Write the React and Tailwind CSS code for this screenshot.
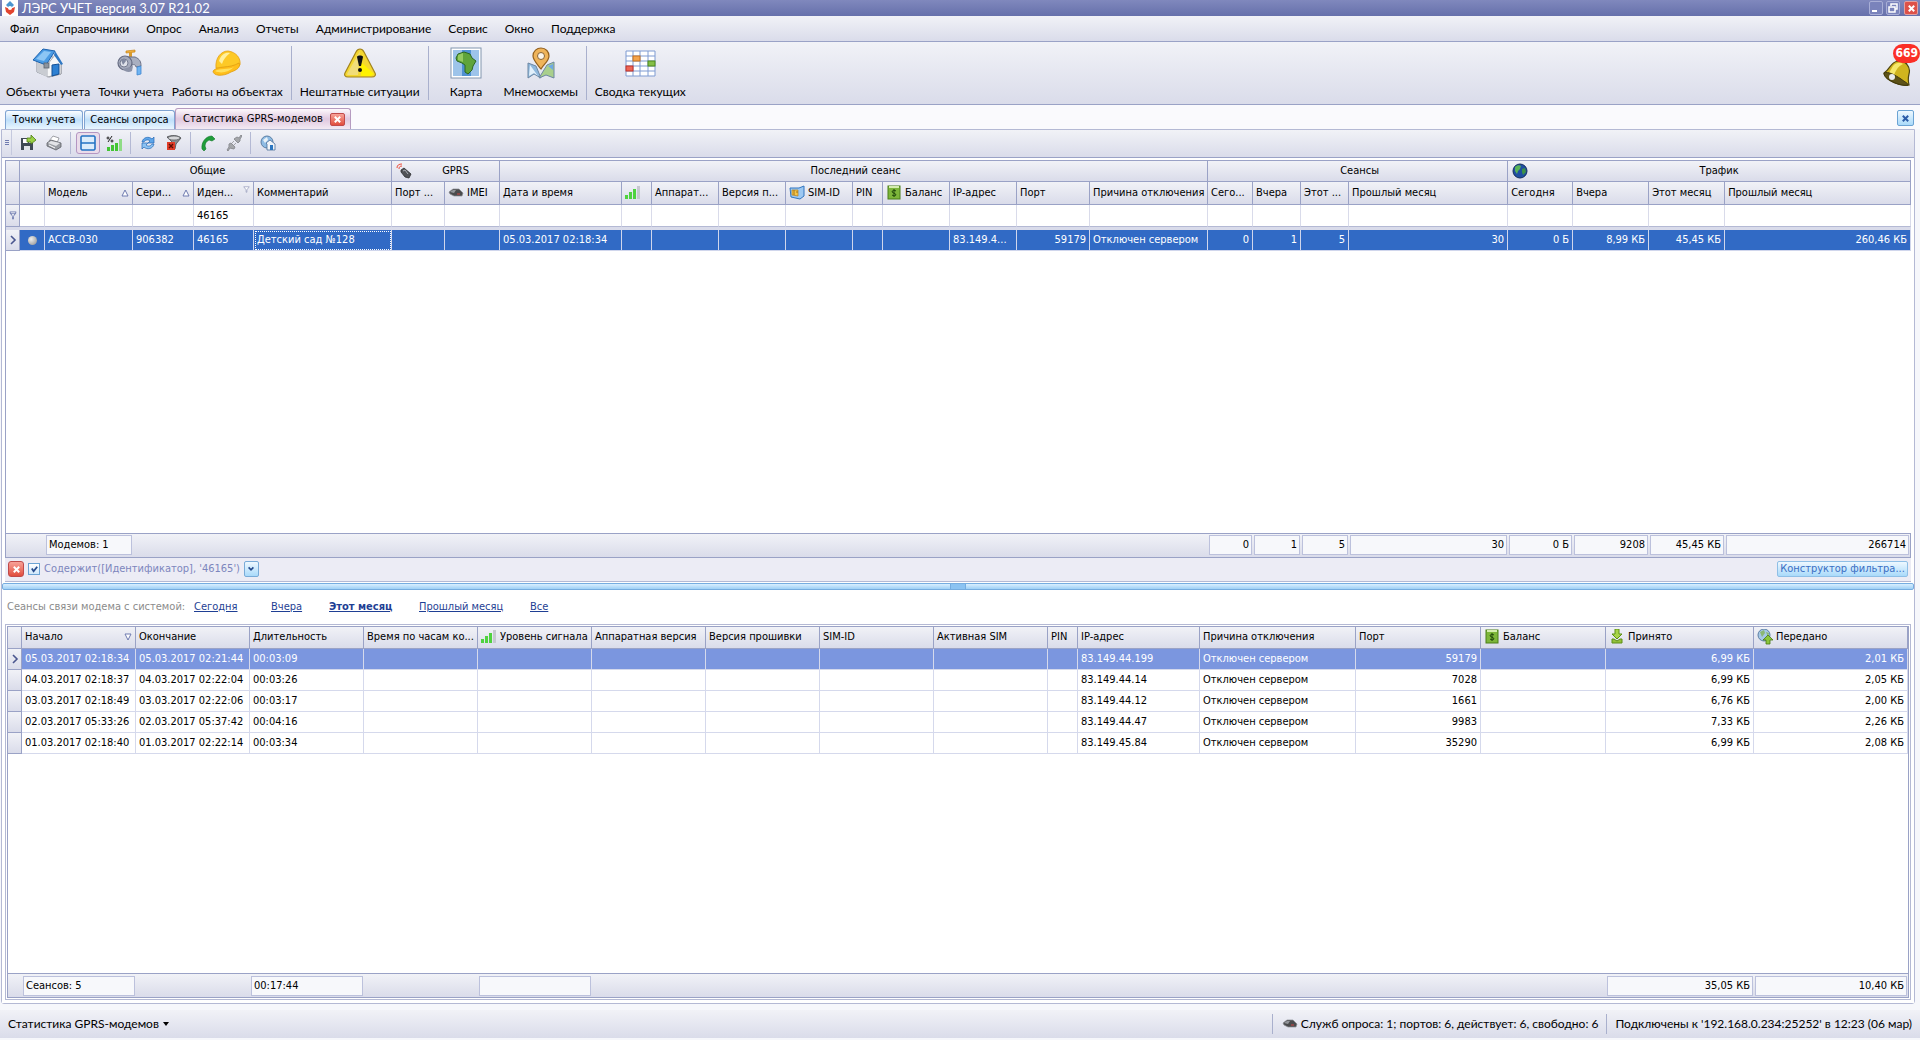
import clsx from 'clsx';

const menuItems = ['Файл', 'Справочники', 'Опрос', 'Анализ', 'Отчеты', 'Администрирование', 'Сервис', 'Окно', 'Поддержка'];

const HouseIcon = () => (
  <svg viewBox="0 0 32 32" className="size-8">
    <path d="M5 14 L18 8 L29 17 V27 L17 30 L5 25 Z" fill="#e9ebee" stroke="#8b8f98" strokeWidth="1" />
    <path d="M15 18 L23 8 L29 17 V27 L15 30 Z" fill="#f6f7f8" stroke="#9a9da5" strokeWidth=".8" />
    <path d="M5 14 L15 18 V30 L5 25 Z" fill="#c9ccd2" />
    <path d="M1 13 L11 2 L23 4 L14 18 Z" fill="#4a9be4" stroke="#1c62ae" strokeWidth="1" />
    <path d="M4 12 L12 4 L19 5 L12 14 Z" fill="#8cc6f5" />
    <path d="M23 4 L31 17 L29 18 L22 8 Z" fill="#2f78c4" />
    <path d="M20 18 L27 17 V27 L20 29 Z" fill="#2d80d2" stroke="#145096" strokeWidth="1" />
    <rect x="12" y="16" width="5" height="5" fill="#8c949f" stroke="#5d646e" strokeWidth=".8" />
  </svg>
);

const TapIcon = () => (
  <svg viewBox="0 0 32 32" className="size-8">
    <path d="M11 4 L20 3 L20 5 L11 6 Z" fill="#f0b03a" stroke="#c88418" strokeWidth=".7" />
    <rect x="14" y="5" width="3" height="5" fill="#d99a2c" />
    <path d="M12 10 H20 C25 12 26 15 26 19 L21 20 C21 18 19 17 17 18 Z" fill="#a9afc0" stroke="#6a7086" strokeWidth="1" />
    <circle cx="10" cy="16" r="7" fill="#a5abbd" stroke="#666c82" strokeWidth="1.2" />
    <circle cx="9" cy="16" r="4" fill="#dfe2ea" stroke="#767c91" />
    <path d="M6 13 C8 11 11 12 11 14 L8 18 Z" fill="#8189a0" />
    <path d="M8 22 L18 19 L17 24 C14 26 10 25 8 22 Z" fill="#8c93a8" />
    <path d="M22 20 L26 19 L26 27 L22 28 Z" fill="#6fb4f2" stroke="#3f86cf" strokeWidth=".8" />
  </svg>
);

const HelmetIcon = () => (
  <svg viewBox="0 0 32 32" className="size-8">
    <path d="M5 21 C4 11 10 4 17 4 C25 5 30 11 29 18 L24 23 Z" fill="#fdc926" stroke="#e6a012" strokeWidth=".8" />
    <path d="M8 14 C10 7 15 5 19 6 C15 9 12 13 11 17 Z" fill="#fff0a0" />
    <path d="M2 24 C7 18 18 22 28 16 C30 20 26 23 20 25 C12 30 2 29 2 24 Z" fill="#ffbe1b" stroke="#e09d12" strokeWidth=".8" />
    <path d="M4 24 C9 21 17 23 23 20 C18 25 10 27 4 24 Z" fill="#ffe05c" />
  </svg>
);

const WarningIcon = () => (
  <svg viewBox="0 0 32 32" className="size-8">
    <path d="M16 2 C18 2 19 3 20 5 L31 26 C32 28 31 30 28 30 H4 C1 30 0 28 1 26 L12 5 C13 3 14 2 16 2 Z" fill="#f4d730" stroke="#a2831c" strokeWidth="1.2" />
    <path d="M16 4 L3 27 C3 28 4 28 5 28 H14 Z" fill="#f2dd78" />
    <path d="M17 15 L30 27 L27 29 H17 Z" fill="#fff200" />
    <path d="M13 10 C13 8 19 8 19 10 L17 19 H15 Z" fill="#111" />
    <circle cx="16" cy="23" r="2" fill="#111" />
  </svg>
);

const MapIcon = () => (
  <svg viewBox="0 0 32 32" className="size-8">
    <rect x="1" y="1" width="30" height="30" fill="#fff" stroke="#8296ae" />
    <rect x="3" y="3" width="26" height="26" fill="#9dc4ea" />
    <rect x="12" y="3" width="9" height="26" fill="#4f91d2" />
    <path d="M8 7 L14 5 L20 7 L22 11 L26 14 L23 19 L22 23 L18 27 L15 25 L15 18 L12 16 L7 14 L6 11 Z" fill="#5fa43a" stroke="#2c6722" strokeWidth="1" />
    <path d="M8 8 L13 6 V15 L8 13 Z" fill="#95cb62" />
  </svg>
);

const PinIcon = () => (
  <svg viewBox="0 0 32 32" className="size-8">
    <path d="M3 16 L11 19 L16 31 L9 27 L3 31 Z" fill="#8fb8dd" stroke="#6d87a3" />
    <path d="M29 15 L22 18 L14 31 L21 28 L29 31 Z" fill="#a9cf8c" stroke="#6d87a3" />
    <path d="M23 19 L28 17 V23 Z" fill="#6ea9e4" />
    <path d="M5 18 L13 29 L9 26 L4 29 Z" fill="#e3f0fb" />
    <path d="M16 22 C12 17 8 13 8 9 C8 4 12 1 16 1 C21 1 24 5 24 9 C24 14 19 17 16 22 Z" fill="#efb45a" stroke="#93601e" strokeWidth="1.2" />
    <circle cx="16" cy="9" r="3.5" fill="#fbf5ea" stroke="#8a6334" />
  </svg>
);

const CalendarIcon = () => (
  <svg viewBox="0 0 32 32" className="size-8">
    <rect x="2" y="4" width="29" height="25" fill="#fff" />
    <path d="M2 4 H31 V29 H2 Z M2 9 H31 M2 14 H31 M2 19 H31 M2 24 H31 M9 4 V29 M16 4 V29 M24 4 V29" fill="none" stroke="#7f9bd2" />
    <rect x="9" y="9" width="7" height="5" fill="#f4a44c" stroke="#c8701a" />
    <rect x="24" y="14" width="7" height="5" fill="#84bf47" stroke="#4f8a1d" />
    <rect x="2" y="19" width="7" height="5" fill="#ee6555" stroke="#c03328" />
  </svg>
);

const toolGroups = [
  [
    { label: 'Объекты учета', icon: HouseIcon },
    { label: 'Точки учета', icon: TapIcon },
    { label: 'Работы на объектах', icon: HelmetIcon },
  ],
  [{ label: 'Нештатные ситуации', icon: WarningIcon }],
  [
    { label: 'Карта', icon: MapIcon, wide: true },
    { label: 'Мнемосхемы', icon: PinIcon },
  ],
  [{ label: 'Сводка текущих', icon: CalendarIcon }],
];

const BellIcon = () => (
  <svg viewBox="0 0 30 30" className="size-[30px]">
    <path d="M22 2 L26 4 L25 7 L20 6 Z" fill="#3f3c22" />
    <path d="M2 16 C8 13 8 5 16 4 C24 4 29 10 27 17 C26 21 26 24 27 28 C20 30 3 24 2 16 Z" fill="#d0b41e" stroke="#4f4510" strokeWidth="1.2" />
    <path d="M11 9 C14 5 19 5 21 7 C15 10 13 15 12 19 L7 16 Z" fill="#f6e86c" />
    <path d="M2 16 C6 14 13 18 19 22 C23 25 27 27 26 28 C19 30 1 22 2 16 Z" fill="#5d5218" stroke="#3f380c" />
    <circle cx="10" cy="20" r="3" fill="#e9ebef" />
  </svg>
);

const BarsIcon = () => (
  <svg viewBox="0 0 16 16" className="size-4 shrink-0">
    <path d="M0 10 H3 V14 H0 Z M4 7 H7 V14 H4 Z M8 4 H11 V14 H8 Z" fill="#4fd23f" />
    <path d="M12 1 H15 V14 H12 Z" fill="#c6c8d0" />
  </svg>
);

const ModemIcon = () => (
  <svg viewBox="0 0 16 16" className="size-4 shrink-0">
    <path d="M1 7 L5 4 L11 4 L15 8 L14 11 L6 11 L2 9 Z" fill="#4a4b4d" stroke="#8b8d92" strokeWidth=".7" />
    <path d="M2 7 L5 5 L8 5 L6 8 Z" fill="#93969b" />
    <path d="M9 9 L12 9" stroke="#c44" />
  </svg>
);

const AntennaIcon = () => (
  <svg viewBox="0 0 16 16" className="size-4">
    <path d="M5 7 L8 5 L15 11 L13 15 L9 14 L5 9 Z" fill="#505256" stroke="#2b2c2f" strokeWidth=".8" />
    <path d="M7 8 L9 7 L12 11" fill="none" stroke="#a9acb2" />
    <path d="M1 5 C1 2 3 1 6 1 M3 6 C3 4 4 3 6 3" fill="none" stroke="#ee4b38" />
  </svg>
);

const SimIcon = () => (
  <svg viewBox="0 0 16 16" className="size-4 shrink-0">
    <path d="M1 3 L10 3 L15 1 V11 L11 14 L2 12 Z" fill="#9cc8f2" stroke="#3277c0" />
    <path d="M3 5 L9 5 V11 L3 10 Z" fill="#f6c445" stroke="#b3801c" strokeWidth=".7" />
    <path d="M5 5 V10 M7 7 H9" stroke="#8a6215" strokeWidth=".8" />
  </svg>
);

const MoneyIcon = () => (
  <svg viewBox="0 0 16 16" className="size-4 shrink-0">
    <rect x="2" y="1" width="12" height="13" fill="#7db63a" stroke="#4b7f18" />
    <rect x="3" y="1" width="10" height="2" fill="#d4edae" />
    <path d="M10 6 C9 5 6 5 6 7 C6 8 10 8 10 10 C10 11 7 11 6 10 M8 4 V12" fill="none" stroke="#20480a" />
  </svg>
);

const GlobeIcon = () => (
  <svg viewBox="0 0 16 16" className="size-4">
    <circle cx="8" cy="8" r="7" fill="#1f4fa0" stroke="#122c5c" />
    <path d="M3 4 C5 2 8 2 9 3 L8 6 L6 8 L5 11 L3 8 Z" fill="#58b356" />
    <path d="M10 6 L13 5 L14 9 L11 12 L10 9 Z" fill="#3c9346" />
  </svg>
);

const DownIcon = () => (
  <svg viewBox="0 0 16 16" className="size-4 shrink-0">
    <path d="M6 0 H10 V5 H13 L8 10 L3 5 H6 Z" fill="#a8d548" stroke="#5c8f16" />
    <path d="M3 10 H5 L8 12 L11 10 H13 V14 H3 Z" fill="#93c13a" stroke="#5c8f16" />
  </svg>
);

const UpIcon = () => (
  <svg viewBox="0 0 16 16" className="size-4 shrink-0">
    <circle cx="7" cy="6" r="6" fill="#a6c8e6" stroke="#5c7fa3" />
    <path d="M3 3 L7 1 L8 4 L5 8 Z M9 3 L12 4 L11 8 Z" fill="#8bb874" />
    <path d="M11 6 L16 11 H13 V15 H9 V11 H6 Z" fill="#8cc63c" stroke="#47780f" strokeWidth=".8" />
  </svg>
);

const SaveIcon = () => (
  <svg viewBox="0 0 16 16" className="size-4">
    <path d="M1 3 H9 V8 H13 V15 H1 Z" fill="#3f4a55" />
    <rect x="3" y="4" width="5" height="4" fill="#fff" />
    <rect x="4" y="11" width="6" height="4" fill="#dfe4ea" />
    <path d="M7 3 H11 V0 L16 5 L11 9 V7 H7 Z" fill="#9ad046" stroke="#4b7c12" strokeWidth=".8" />
  </svg>
);

const PrinterIcon = () => (
  <svg viewBox="0 0 16 16" className="size-4">
    <path d="M3 6 L7 1 L13 3 L11 8 Z" fill="#fff" stroke="#8a8d93" strokeWidth=".8" />
    <path d="M1 8 L5 5 L15 8 V12 L10 15 L1 11 Z" fill="#9a9da3" stroke="#5d6066" strokeWidth=".8" />
    <path d="M2 8 L5 6 L14 8 L10 11 Z" fill="#e3e4e7" />
    <path d="M3 10 L9 13" stroke="#fff" />
  </svg>
);

const PaneIcon = () => (
  <svg viewBox="0 0 16 16" className="size-4">
    <path d="M2 1 H14 L15 2 V14 L14 15 H2 L1 14 V2 Z M1 8 H15" fill="#dcecfb" stroke="#2573c4" strokeWidth="1.6" />
  </svg>
);

const PercentBarsIcon = () => (
  <svg viewBox="0 0 16 16" className="size-4">
    <path d="M1 12 H4 V16 H1 Z M5 10 H8 V16 H5 Z M9 8 H12 V16 H9 Z" fill="#43c534" />
    <path d="M13 4 H16 V16 H13 Z" fill="#8fdc86" />
    <path d="M6 1 L2 7" stroke="#222" />
    <circle cx="2" cy="3" r="1" fill="none" stroke="#222" />
    <circle cx="6" cy="6" r="1" fill="none" stroke="#222" />
  </svg>
);

const RefreshIcon = () => (
  <svg viewBox="0 0 16 16" className="size-4">
    <path d="M2 7 C3 2 9 1 12 4 L14 2 V8 H8 L10 6 C8 4 5 5 4 7 Z" fill="#5ea6ea" stroke="#2568b4" strokeWidth=".7" />
    <path d="M14 9 C13 14 7 15 4 12 L2 14 V8 H8 L6 10 C8 12 11 11 12 9 Z" fill="#8cc3f4" stroke="#2568b4" strokeWidth=".7" />
  </svg>
);

const ClearFilterIcon = () => (
  <svg viewBox="0 0 16 16" className="size-4">
    <path d="M1 2 C5 0 12 0 15 3 L10 9 L9 14 L7 14 L7 8 Z" fill="#8c8e92" stroke="#4a4b4e" strokeWidth=".8" />
    <ellipse cx="8" cy="3" rx="6" ry="2" fill="#d6d7da" stroke="#55575b" strokeWidth=".7" />
    <rect x="1" y="7" width="8" height="8" fill="#e03c28" />
    <path d="M3 9 L7 13 M7 9 L3 13" stroke="#5c0d05" strokeWidth="1.4" />
  </svg>
);

const PhoneIcon = () => (
  <svg viewBox="0 0 16 16" className="size-4">
    <path d="M2 14 C1 7 6 1 12 1 L15 4 L12 6 L9 5 C7 6 5 8 5 11 L6 14 L4 16 Z" fill="#1f9d3a" stroke="#12762a" strokeWidth=".6" />
  </svg>
);

const PlugIcon = () => (
  <svg viewBox="0 0 16 16" className="size-4">
    <path d="M1 15 L3 12 L3 9 L5 8 L9 12 L8 14 L4 13 L2 16 Z M8 4 L11 2 L13 3 L15 0 L16 1 L14 4 L14 6 L12 8 Z" fill="#a4a6aa" stroke="#8d8f94" strokeWidth="1" />
    <path d="M6 8 L8 6 M8 10 L10 8" stroke="#a4a6aa" />
  </svg>
);

const HomeGlobeIcon = () => (
  <svg viewBox="0 0 16 16" className="size-4">
    <circle cx="7" cy="7" r="6" fill="#8fbce4" stroke="#5a7ea4" />
    <path d="M3 5 L7 2 L8 5 L5 8 Z" fill="#e8f1f8" />
    <path d="M6 8 L10 5 L15 9 V15 H7 V9 Z" fill="#f1f4f8" stroke="#4a6e9a" strokeWidth=".8" />
    <rect x="10" y="10" width="3" height="5" fill="#2b76c0" />
  </svg>
);

const gridTools = [
  [
    { label: 'Экспорт', icon: SaveIcon },
    { label: 'Печать', icon: PrinterIcon },
  ],
  [
    { label: 'Панель сеансов', icon: PaneIcon, active: true },
    { label: 'Уровень сигнала', icon: PercentBarsIcon },
  ],
  [
    { label: 'Обновить', icon: RefreshIcon },
    { label: 'Сбросить фильтр', icon: ClearFilterIcon },
  ],
  [
    { label: 'Позвонить', icon: PhoneIcon },
    { label: 'Разорвать связь', icon: PlugIcon },
  ],
  [{ label: 'Объект учета', icon: HomeGlobeIcon }],
];

const SortMark = ({ up }) => (
  <svg viewBox="0 0 8 8" className="ml-auto size-2 shrink-0">
    <path d={up ? 'M1 7 L4 1 L7 7 Z' : 'M1 1 L4 7 L7 1 Z'} fill="#fff" stroke="#6f7bb0" />
  </svg>
);

const FilterMark = () => (
  <svg viewBox="0 0 9 9" className="ml-auto mb-2 size-[7px] shrink-0">
    <path d="M1 1 H8 L5 5 V8 H4 V5 Z" fill="#fff" stroke="#9aa0bf" />
  </svg>
);

const RowPointer = () => (
  <svg viewBox="0 0 8 10" className="mx-auto h-[10px] w-2">
    <path d="M2 1 L6 5 L2 9" fill="none" stroke="#4a568f" strokeWidth="1.6" />
  </svg>
);

const Cross = () => (
  <svg viewBox="0 0 10 10" className="size-[9px]">
    <path d="M2 2 L8 8 M8 2 L2 8" stroke="currentColor" strokeWidth="2.2" />
  </svg>
);

const modemWidths = [14, 25, 88, 61, 60, 138, 53, 55, 122, 30, 67, 67, 67, 30, 67, 67, 73, 118, 45, 48, 48, 159, 65, 76, 76, null];

const modemGroups = [
  { label: 'Общие', span: 5 },
  { label: 'GPRS', span: 2, icon: AntennaIcon },
  { label: 'Последний сеанс', span: 10 },
  { label: 'Сеансы', span: 4 },
  { label: 'Трафик', span: 4, icon: GlobeIcon },
];

const modemColumns = [
  { label: '', value: '' },
  { label: 'Модель', value: 'АССВ-030', sort: 'up' },
  { label: 'Сери...', value: '906382', sort: 'up' },
  { label: 'Иден...', value: '46165', filter: '46165' },
  { label: 'Комментарий', value: 'Детский сад №128' },
  { label: 'Порт ...' },
  { label: 'IMEI', icon: ModemIcon },
  { label: 'Дата и время', value: '05.03.2017 02:18:34' },
  { label: '', icon: BarsIcon },
  { label: 'Аппарат...' },
  { label: 'Версия п...' },
  { label: 'SIM-ID', icon: SimIcon },
  { label: 'PIN' },
  { label: 'Баланс', icon: MoneyIcon },
  { label: 'IP-адрес', value: '83.149.4...' },
  { label: 'Порт', value: '59179', right: true },
  { label: 'Причина отключения', value: 'Отключен сервером' },
  { label: 'Сего...', value: '0', right: true },
  { label: 'Вчера', value: '1', right: true },
  { label: 'Этот ...', value: '5', right: true },
  { label: 'Прошлый месяц', value: '30', right: true },
  { label: 'Сегодня', value: '0 Б', right: true },
  { label: 'Вчера', value: '8,99 КБ', right: true },
  { label: 'Этот месяц', value: '45,45 КБ', right: true },
  { label: 'Прошлый месяц', value: '260,46 КБ', right: true },
];

const modemTotals = { 1: 'Модемов: 1', 17: '0', 18: '1', 19: '5', 20: '30', 21: '0 Б', 22: '9208', 23: '45,45 КБ', 24: '266714' };

const sessionWidths = [14, 114, 114, 114, 114, 114, 114, 114, 114, 114, 30, 122, 156, 125, 125, 148, null];

const sessionColumns = [
  { label: 'Начало', sort: 'down' },
  { label: 'Окончание' },
  { label: 'Длительность' },
  { label: 'Время по часам ко...' },
  { label: 'Уровень сигнала', icon: BarsIcon },
  { label: 'Аппаратная версия' },
  { label: 'Версия прошивки' },
  { label: 'SIM-ID' },
  { label: 'Активная SIM' },
  { label: 'PIN' },
  { label: 'IP-адрес' },
  { label: 'Причина отключения' },
  { label: 'Порт', right: true },
  { label: 'Баланс', icon: MoneyIcon },
  { label: 'Принято', icon: DownIcon, right: true },
  { label: 'Передано', icon: UpIcon, right: true },
];

const session = (start, end, length, ip, port, received, sent) => [
  start, end, length, '', '', '', '', '', '', '', ip, 'Отключен сервером', port, '', received, sent,
];

const sessions = [
  session('05.03.2017 02:18:34', '05.03.2017 02:21:44', '00:03:09', '83.149.44.199', '59179', '6,99 КБ', '2,01 КБ'),
  session('04.03.2017 02:18:37', '04.03.2017 02:22:04', '00:03:26', '83.149.44.14', '7028', '6,99 КБ', '2,05 КБ'),
  session('03.03.2017 02:18:49', '03.03.2017 02:22:06', '00:03:17', '83.149.44.12', '1661', '6,76 КБ', '2,00 КБ'),
  session('02.03.2017 05:33:26', '02.03.2017 05:37:42', '00:04:16', '83.149.44.47', '9983', '7,33 КБ', '2,26 КБ'),
  session('01.03.2017 02:18:40', '01.03.2017 02:22:14', '00:03:34', '83.149.45.84', '35290', '6,99 КБ', '2,08 КБ'),
];

const sessionTotals = { 0: 'Сеансов: 5', 2: '00:17:44', 4: '', 14: '35,05 КБ', 15: '10,40 КБ' };

const periods = [
  { label: 'Сегодня', width: 'w-[77px]' },
  { label: 'Вчера', width: 'w-[58px]' },
  { label: 'Этот месяц', width: 'w-[90px]', current: true },
  { label: 'Прошлый месяц', width: 'w-[111px]' },
  { label: 'Все', width: 'w-10' },
];

const silver = 'bg-linear-to-b from-[#f1f2f7] to-[#dadcea]';
const headCell = clsx(silver, 'border-r border-b border-[#9aa2c6] p-0 font-normal');

function Columns({ widths }) {
  return (
    <colgroup>
      {widths.map((width, i) => (
        <col key={i} style={width ? { width } : undefined} />
      ))}
    </colgroup>
  );
}

function HeadLabel({ column }) {
  const Icon = column.icon;
  return (
    <div className="flex items-center gap-[3px] overflow-hidden px-[3px] whitespace-nowrap">
      {Icon && <Icon />}
      {column.label}
      {column.sort && <SortMark up={column.sort === 'up'} />}
      {column.filter && <FilterMark />}
    </div>
  );
}

function Totals({ widths, columns, totals }) {
  return (
    <table className={clsx(silver, 'w-full table-fixed border-separate border-spacing-0 border border-[#9aa2c6]')}>
      <Columns widths={widths} />
      <tbody>
        <tr className="h-[23px]">
          <td />
          {columns.map((column, i) => (
            <td key={i} className="px-px py-0">
              {i in totals && (
                <div
                  className={clsx(
                    'h-5 border border-[#bcc1dc] bg-[#f7f8fb] px-[2px] leading-[18px] whitespace-nowrap',
                    column.right && 'text-right'
                  )}
                >
                  {totals[i]}
                </div>
              )}
            </td>
          ))}
        </tr>
      </tbody>
    </table>
  );
}

function ModemGrid() {
  return (
    <div className="mx-[3px] flex min-h-0 flex-[51_1_0%] flex-col border-t border-[#9aa2c6]">
      <div className="min-h-0 flex-1 border-l border-[#9aa2c6] bg-white">
        <table className="w-full table-fixed border-separate border-spacing-0">
          <Columns widths={modemWidths} />
          <thead>
            <tr className="h-[21px]">
              <th className={headCell} />
              {modemGroups.map((group) => {
                const Icon = group.icon;
                return (
                  <th key={group.label} colSpan={group.span} className={headCell}>
                    <div className="flex items-center pl-1">
                      {Icon && <Icon />}
                      <span className="flex-1">{group.label}</span>
                    </div>
                  </th>
                );
              })}
            </tr>
            <tr className="h-[23px]">
              <th className={headCell} />
              {modemColumns.map((column, i) => (
                <th key={i} className={headCell}>
                  <HeadLabel column={column} />
                </th>
              ))}
            </tr>
          </thead>
          <tbody>
            <tr className="h-[22px]">
              <td className={headCell}>
                <svg viewBox="0 0 9 10" className="mx-auto h-[9px] w-2">
                  <path d="M1 1 H8 L5 6 V9 H4 V6 Z M1 3 H8" fill="#fff" stroke="#6f7bb0" />
                </svg>
              </td>
              {modemColumns.map((column, i) => (
                <td key={i} className="border-r border-b border-[#d9dbea] border-b-[#b4b9d4] p-0">
                  {i > 0 && (
                    <input
                      type="text"
                      aria-label={`Фильтр: ${column.label}`}
                      defaultValue={column.filter}
                      className="block w-full bg-transparent px-[3px] outline-none"
                    />
                  )}
                </td>
              ))}
            </tr>
            <tr className="h-[3px]">
              <td colSpan={26} className="bg-[#d9dbea] p-0" />
            </tr>
            <tr className="h-[21px] bg-[#316ac5] text-white">
              <td className={headCell}>
                <RowPointer />
              </td>
              {modemColumns.map((column, i) => (
                <td
                  key={i}
                  className={clsx(
                    'overflow-hidden border-r border-b border-[#d0d6ec] px-[3px] py-0 whitespace-nowrap',
                    column.right && 'text-right',
                    column.label === 'Комментарий' && 'outline-1 -outline-offset-2 outline-dotted outline-white'
                  )}
                >
                  {i === 0 ? (
                    <div className="mx-auto size-[9px] rounded-full bg-radial-[at_35%_35%] from-[#eee] to-[#8b8b8b]" />
                  ) : (
                    column.value
                  )}
                </td>
              ))}
            </tr>
          </tbody>
        </table>
      </div>
      <Totals widths={modemWidths} columns={modemColumns} totals={modemTotals} />
      <div className="mb-px flex h-6 shrink-0 items-center gap-1 border-b border-[#b4b9d4] bg-[#ececf5] px-[3px] text-[#7d86bd]">
        <button aria-label="Удалить фильтр" className="flex size-4 items-center justify-center rounded-[3px] border border-[#c04a4a] bg-linear-to-b from-[#f7a198] to-[#e04c3c] text-white">
          <Cross />
        </button>
        <label className="flex items-center gap-1">
          <input
            type="checkbox"
            defaultChecked
            className="peer absolute size-3 opacity-0"
          />
          <span className="flex size-3 items-center justify-center border border-[#6ba3d4] bg-linear-to-b from-white to-[#cfe8fb]">
            <svg viewBox="0 0 10 10" className="size-[9px]">
              <path d="M2 4 L4 7 L8 2" fill="none" stroke="#274b8c" strokeWidth="2" />
            </svg>
          </span>
          Содержит([Идентификатор], '46165')
        </label>
        <button aria-label="Последние фильтры" className="flex h-4 w-[15px] items-center justify-center rounded-[2px] border border-[#78abd8] bg-linear-to-b from-[#eef8ff] to-[#a9dafa]">
          <svg viewBox="0 0 10 10" className="size-2">
            <path d="M2 3 L5 6 L8 3" fill="none" stroke="#23498c" strokeWidth="2" />
          </svg>
        </button>
        <button className="ml-auto h-4 w-[131px] overflow-hidden rounded-[2px] border border-[#8fbfe6] bg-linear-to-b from-[#eef8ff] to-[#a9dafa] leading-[14px] whitespace-nowrap text-[#3a6fc4]">
          Конструктор фильтра...
        </button>
      </div>
    </div>
  );
}

function SessionGrid() {
  return (
    <div className="flex min-h-0 flex-[50_1_0%] flex-col bg-white">
      <div className="flex h-[34px] shrink-0 items-center pl-[5px]">
        <span className="w-[187px] text-[#8b8b8b]">Сеансы связи модема с системой:</span>
        {periods.map((period) => (
          <a
            key={period.label}
            href="#"
            className={clsx('text-[#1f3f94]', period.width, period.current && 'font-bold')}
          >
            <span className="underline">{period.label}</span>
          </a>
        ))}
      </div>
      <div className="mx-[3px] mb-[3px] flex min-h-0 flex-1 flex-col border border-[#b4b9d4] p-px">
        <div className="min-h-0 flex-1 border border-b-0 border-[#9aa2c6]">
          <table className="w-full table-fixed border-separate border-spacing-0">
            <Columns widths={sessionWidths} />
            <thead>
              <tr className="h-[22px]">
                <th className={headCell} />
                {sessionColumns.map((column, i) => (
                  <th key={i} className={headCell}>
                    <HeadLabel column={column} />
                  </th>
                ))}
              </tr>
            </thead>
            <tbody>
              {sessions.map((row, rowIndex) => (
                <tr key={row[0]} className={clsx('h-[21px]', rowIndex === 0 && 'bg-[#7b96df] text-white')}>
                  <td className={headCell}>{rowIndex === 0 && <RowPointer />}</td>
                  {row.map((value, i) => (
                    <td
                      key={i}
                      className={clsx(
                        'overflow-hidden border-r border-b border-[#d5d9ec] px-[3px] py-0 whitespace-nowrap',
                        sessionColumns[i].right && 'text-right'
                      )}
                    >
                      {value}
                    </td>
                  ))}
                </tr>
              ))}
            </tbody>
          </table>
        </div>
        <Totals widths={sessionWidths} columns={sessionColumns} totals={sessionTotals} />
      </div>
    </div>
  );
}

function TitleBar() {
  return (
    <header className="flex h-4 shrink-0 items-center bg-linear-to-b from-[#8088bd] to-[#6670ab] px-[2px] text-white">
      <svg viewBox="0 0 16 16" className="size-4">
        <rect width="16" height="16" fill="#fff" />
        <path d="M8 1 L12 5 L8 9 L4 5 Z" fill="#4b95cf" />
        <path d="M3 7 L8 9 L13 7 L12 12 L8 15 L4 12 Z" fill="#e2452f" />
        <circle cx="8" cy="8" r="2" fill="#fff" />
      </svg>
      <h1 className="ml-1 text-[13px] leading-4">ЛЭРС УЧЕТ версия 3.07 R21.02</h1>
      <div className="ml-auto flex gap-[3px]">
        <button aria-label="Свернуть" className="flex size-[14px] items-center justify-center rounded-[2px] border border-[#a8aed6] bg-[#7a83bb]">
          <svg viewBox="0 0 10 10" className="size-[10px]">
            <path d="M1 8 H6" stroke="#fff" strokeWidth="2" />
          </svg>
        </button>
        <button aria-label="Восстановить" className="flex size-[14px] items-center justify-center rounded-[2px] border border-[#a8aed6] bg-[#7a83bb]">
          <svg viewBox="0 0 10 10" className="size-[10px]">
            <path d="M3 3 V1 H9 V6 H7 M1 4 H7 V9 H1 Z" fill="none" stroke="#fff" strokeWidth="1.5" />
          </svg>
        </button>
        <button aria-label="Закрыть" className="ml-px flex size-[14px] items-center justify-center rounded-[2px] border border-[#e0a0a0] bg-[#dd5149]">
          <Cross />
        </button>
      </div>
    </header>
  );
}

function MainToolbar() {
  return (
    <div className={clsx(silver, 'flex h-[63px] shrink-0 border-b border-[#9aa2c6] pl-[2px]')}>
      {toolGroups.map((group, i) => (
        <div key={i} className={clsx('my-1 flex', i > 0 && 'ml-1 border-l border-[#a9b0cd] pl-1')}>
          {group.map((tool) => {
            const Icon = tool.icon;
            return (
              <button
                key={tool.label}
                className={clsx('flex flex-col items-center px-1 pt-px whitespace-nowrap', tool.wide && 'w-[67px]')}
              >
                <Icon />
                <span className="mt-[5px]">{tool.label}</span>
              </button>
            );
          })}
        </div>
      ))}
      <button aria-label="Уведомления: 669" className="relative mt-[15px] mr-2 ml-auto size-[30px]">
        <BellIcon />
        <span className="absolute -top-[13px] -right-2 rounded-full bg-[#fb2f26] px-[2px] font-['DejaVu_Sans_Condensed','DejaVu_Sans',sans-serif] text-xs leading-[19px] font-bold text-white">
          669
        </span>
      </button>
    </div>
  );
}

function Tabs() {
  return (
    <div className="flex h-6 shrink-0 items-end bg-[#fafafd] pr-[6px] pl-[5px]">
      <button className="h-[19px] w-[78px] rounded-t-[3px] border border-b-0 border-[#7fa3d2] bg-linear-to-b from-[#fbfdff] via-[#bfdffa] to-[#e9f6ff]">Точки учета</button>
      <button className="ml-px h-[19px] w-[91px] rounded-t-[3px] border border-b-0 border-[#7fa3d2] bg-linear-to-b from-[#fbfdff] via-[#bfdffa] to-[#e9f6ff]">Сеансы опроса</button>
      <div className="flex h-[21px] w-[176px] items-center justify-between rounded-t-[3px] border border-b-0 border-[#b59bc0] bg-linear-to-b from-[#fdf9fc] via-[#e0c8df] to-[#f3eaf3] pr-[5px] pl-[7px]">
        <button>Статистика GPRS-модемов</button>
        <button aria-label="Закрыть вкладку" className="flex h-[13px] w-[15px] items-center justify-center rounded-[2px] border border-[#c04a4a] bg-linear-to-b from-[#f7a198] to-[#e04c3c] text-white">
          <Cross />
        </button>
      </div>
      <button aria-label="Закрыть" className="mb-[3px] ml-auto flex h-4 w-[17px] items-center justify-center rounded-[2px] border border-[#6ba3d4] bg-linear-to-b from-[#eef8ff] to-[#a9dafa] text-[#2b5ca8]">
        <Cross />
      </button>
    </div>
  );
}

function GridToolbar() {
  return (
    <div className={clsx(silver, 'flex h-7 shrink-0 items-center border-b border-[#9aa2c6] pb-[2px]')}>
      <div className="mr-1 ml-[3px] flex h-full w-[7px] flex-col justify-center gap-px border-r border-[#c5c9de]">
        <i className="h-px w-1 bg-[#6f7bb0]" />
        <i className="h-px w-1 bg-[#6f7bb0]" />
        <i className="h-px w-1 bg-[#6f7bb0]" />
      </div>
      {gridTools.map((group, i) => (
        <div key={i} className={clsx('flex gap-[2px]', i > 0 && 'ml-1 border-l border-[#b4b9d4] pl-[5px]')}>
          {group.map((tool) => {
            const Icon = tool.icon;
            return (
              <button
                key={tool.label}
                aria-label={tool.label}
                className={clsx(
                  'flex h-[22px] w-6 items-center justify-center rounded-[3px] border',
                  tool.active ? 'border-[#b496c2] bg-[#eadcea]' : 'border-transparent'
                )}
              >
                <Icon />
              </button>
            );
          })}
        </div>
      ))}
    </div>
  );
}

export default function App() {
  return (
    <div className="flex h-screen flex-col bg-[#f6f7fb] font-[Lato,'Noto_Sans',sans-serif] text-xs leading-4 text-black">
      <TitleBar />
      <nav className={clsx(silver, 'flex h-[26px] shrink-0 items-center gap-[17px] border-b border-[#9aa2c6] pl-[10px]')}>
        {menuItems.map((item) => (
          <button key={item}>{item}</button>
        ))}
      </nav>
      <MainToolbar />
      <main className="flex min-h-0 flex-1 flex-col font-['DejaVu_Sans_Condensed','DejaVu_Sans',sans-serif] text-[11px] leading-[14px]">
        <Tabs />
        <div className="mr-[5px] ml-px flex min-h-0 flex-1 flex-col rounded-b-[3px] border border-[#b4b9d4] bg-white">
          <GridToolbar />
          <div className="h-[2px] shrink-0" />
          <ModemGrid />
          <div className="flex h-[7px] shrink-0 justify-center rounded-[2px] border border-[#76ade0] bg-linear-to-b from-[#d9efff] to-[#9fd0f5]">
            <div className="w-4 border-x border-[#76ade0] bg-[#8cc3f2]" />
          </div>
          <SessionGrid />
        </div>
      </main>
      <footer className={clsx(silver, 'mt-[6px] mb-[2px] flex h-7 shrink-0 items-center px-2')}>
        <button className="flex items-center gap-1">
          Статистика GPRS-модемов
          <svg viewBox="0 0 6 4" className="h-1 w-[6px]">
            <path d="M0 0 H6 L3 4 Z" />
          </svg>
        </button>
        <div className="ml-auto flex h-5 items-center gap-[3px] border-l border-[#a9b0cd] pr-2 pl-[9px]">
          <ModemIcon />
          Служб опроса: 1; портов: 6, действует: 6, свободно: 6
        </div>
        <div className="flex h-5 items-center border-l border-[#a9b0cd] pl-2">Подключены к '192.168.0.234:25252' в 12:23 (06 мар)</div>
      </footer>
    </div>
  );
}
